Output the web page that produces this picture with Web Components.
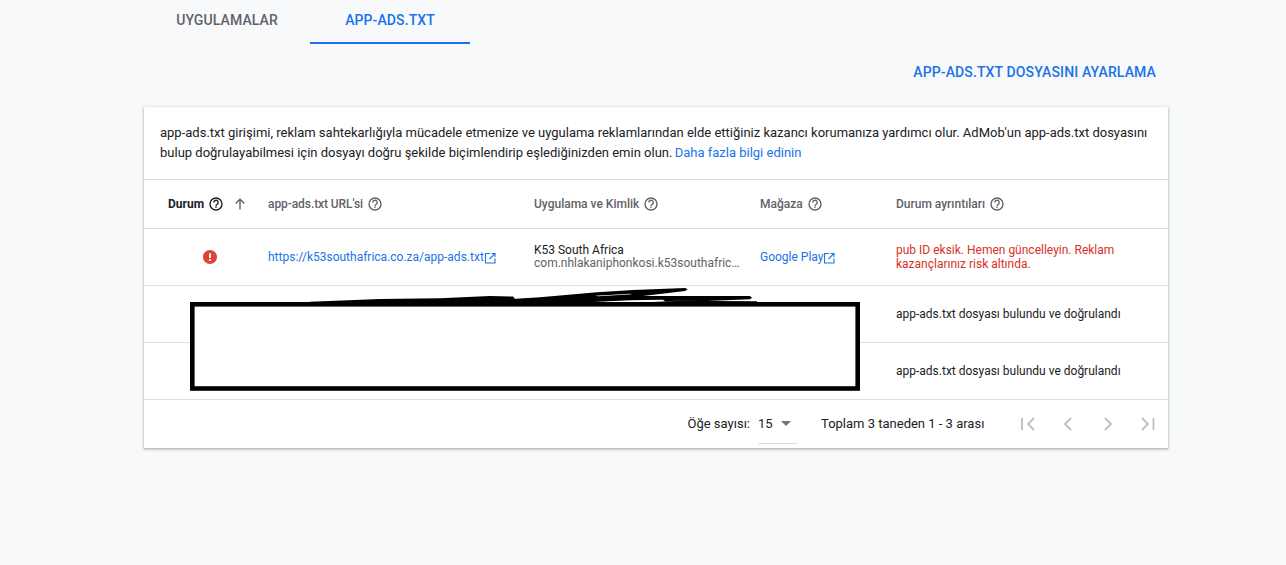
<!DOCTYPE html>
<html lang="tr"><head><meta charset="utf-8">
<style>
html,body{margin:0;padding:0;background:#f8f9fa;height:565px;overflow:hidden;font-family:Roboto,sans-serif;}
body{position:relative}
</style></head><body>
<ads-page>
  <ads-tabs slot="tabs"></ads-tabs>
  <ads-action slot="action">APP-ADS.TXT DOSYASINI AYARLAMA</ads-action>
  <ads-card slot="card">
    <ads-intro></ads-intro>
    <ads-table></ads-table>
    <ads-pager></ads-pager>
  </ads-card>
</ads-page>
<ads-redaction></ads-redaction>
<script>
const HELP='<svg class="help" width="16" height="16" viewBox="0 0 16 16"><circle cx="8" cy="8" r="6" fill="none" stroke="currentColor" stroke-width="1.4"/><path d="M5.8 6.5a2.2 2.2 0 1 1 3.5 1.7c-.8.5-1.3.8-1.3 1.7" fill="none" stroke="currentColor" stroke-width="1.35"/><rect x="7.3" y="10.5" width="1.4" height="1.4" fill="currentColor"/></svg>';
const EXT='<svg class="ext" width="12" height="12" viewBox="0 0 12 12"><path d="M6 1.5H1.5v9.5H11V6.5M7.5 1.5H11V5M10.8 1.7 5.5 7" fill="none" stroke="currentColor" stroke-width="1.1"/></svg>';
function def(name,css,html){
  customElements.define(name,class extends HTMLElement{
    constructor(){super();this.attachShadow({mode:'open'}).innerHTML='<style>'+css+'</style>'+html;}
  });
}
def('ads-page',`:host{display:block}
  .action{display:flex;justify-content:flex-end;padding:0 130px 0 0;height:63px;align-items:flex-start}
  .card{padding:0 118px 0 144px}`,
  `<slot name="tabs"></slot><div class="action"><slot name="action"></slot></div><div class="card"><slot name="card"></slot></div>`);
def('ads-tabs',`:host{display:flex;height:44px;padding-left:144px;font:500 14px/40px Roboto,sans-serif;letter-spacing:.1px}
  a{display:block;text-align:center;box-sizing:border-box;height:44px}
  .a{width:166px;color:#5f6368}
  .b{width:160px;color:#1a73e8;border-bottom:2px solid #1a73e8}`,
  `<a class="a">UYGULAMALAR</a><a class="b">APP-ADS.TXT</a>`);
def('ads-action',`:host{display:block;margin-top:20px;font:500 14px/17px Roboto,sans-serif;color:#1a73e8;letter-spacing:.13px}`,`<slot></slot>`);
def('ads-card',`:host{display:block;background:#fff;box-shadow:0 1px 2px rgba(60,64,67,.3),0 1px 3px 1px rgba(60,64,67,.15);height:341px}`,`<slot></slot>`);
def('ads-intro',`:host{display:block;box-sizing:border-box;height:73px;padding:16px 16px 0;font:13px/20px Roboto,sans-serif;color:#202124;border-bottom:1px solid #dadce0}
  a{color:#1a73e8;margin-left:-1px}`,
  `app-ads.txt girişimi, reklam sahtekarlığıyla mücadele etmenize ve uygulama reklamlarından elde ettiğiniz kazancı korumanıza yardımcı olur. AdMob'un app-ads.txt dosyasını bulup doğrulayabilmesi için dosyayı doğru şekilde biçimlendirip eşlediğinizden emin olun. <a>Daha fazla bilgi edinin</a>`);
def('ads-table',`:host{display:block;font:12px/14px Roboto,sans-serif;color:#202124}
  .row{display:grid;grid-template-columns:124px 266px 226px 136px 1fr;align-items:center;box-sizing:border-box;height:57px;border-bottom:1px solid #e0e0e0}
  .head{height:49px;border-bottom-color:#dadce0;font-weight:500;color:#5f6368}
  .h{display:flex;align-items:center;gap:4px}
  .first{padding-left:24px;color:#202124;font-weight:700}
  .first .help{color:#202124}
  .arrow{margin-left:4px;color:#5f6368}
  .url{letter-spacing:-.08px}
  .st{display:flex;padding-left:59px}
  a{color:#1a73e8;display:flex;align-items:center;gap:0}
  .ext{margin-top:1px}
  .app{padding-bottom:2px}
  .id{color:#5f6368;line-height:13px;white-space:nowrap}
  .red{color:#d93025;padding-right:30px;line-height:14px}`,
  `<div class="row head">
    <div class="h first">Durum ${HELP}<svg class="arrow" width="16" height="16" viewBox="0 0 16 16"><path d="M8 13.5V3.2M3.6 7.6 8 3.2l4.4 4.4" fill="none" stroke="currentColor" stroke-width="1.4"/></svg></div>
    <div class="h"><span class="url">app-ads.txt URL'si</span> ${HELP}</div>
    <div class="h">Uygulama ve Kimlik ${HELP}</div>
    <div class="h">Mağaza ${HELP}</div>
    <div class="h">Durum ayrıntıları ${HELP}</div>
  </div>
  <div class="row">
    <div class="st"><svg width="14" height="14" viewBox="0 0 14 14"><circle cx="7" cy="7" r="7" fill="#db4437"/><rect x="6.1" y="3.2" width="1.8" height="4.8" fill="#fff"/><rect x="6.1" y="9" width="1.8" height="1.8" fill="#fff"/></svg></div>
    <div><a>https://k53southafrica.co.za/app-ads.txt${EXT}</a></div>
    <div class="app"><div>K53 South Africa</div><div class="id">com.nhlakaniphonkosi.k53southafric…</div></div>
    <div><a>Google Play${EXT}</a></div>
    <div class="red">pub ID eksik. Hemen güncelleyin. Reklam kazançlarınız risk altında.</div>
  </div>
  <div class="row"><div></div><div></div><div></div><div></div><div>app-ads.txt dosyası bulundu ve doğrulandı</div></div>
  <div class="row"><div></div><div></div><div></div><div></div><div>app-ads.txt dosyası bulundu ve doğrulandı</div></div>`);
def('ads-pager',`:host{display:flex;align-items:center;height:48px;font:13px/16px Roboto,sans-serif;color:#202124;white-space:nowrap}
  .l{margin-left:543.5px}
  .sel{margin-left:8px;width:39px;height:32px;box-sizing:border-box;border-bottom:1px solid #dadce0;display:flex;align-items:center;gap:8px;margin-top:8px;padding-bottom:8px}
  .tot{margin-left:24px}
  .btns{display:flex;margin-left:auto}
  .btns svg{display:block;width:40px;height:24px;color:#bdbdbd}`,
  `<span class="l">Öğe sayısı:</span>
   <div class="sel"><span>15</span><svg width="10" height="5" viewBox="0 0 10 5"><path d="M0 0h10L5 5z" fill="#757575"/></svg></div>
   <span class="tot">Toplam 3 taneden 1 - 3 arası</span>
   <div class="btns">
   <svg viewBox="0 0 40 24"><path d="M14 6v12M26 6l-6 6 6 6" fill="none" stroke="currentColor" stroke-width="1.8"/></svg>
   <svg viewBox="0 0 40 24"><path d="M23 6l-6 6 6 6" fill="none" stroke="currentColor" stroke-width="1.8"/></svg>
   <svg viewBox="0 0 40 24"><path d="M17 6l6 6-6 6" fill="none" stroke="currentColor" stroke-width="1.8"/></svg>
   <svg viewBox="0 0 40 24"><path d="M14 6l6 6-6 6M25.5 6v12" fill="none" stroke="currentColor" stroke-width="1.8"/></svg>
   </div>`);
def('ads-redaction',`:host{position:absolute;left:0;top:0;width:1286px;height:565px;pointer-events:none}
  svg{display:block}`,
  `<svg width="1286" height="565" viewBox="0 0 1286 565">
   <path d="M310 301.7L380 299L440 298.3L490 296L513 296.6L515 298.7L508 299.3L540 297.3L597 292.3L633 290L685 288L687.7 289.3L685 291L643 296L750 296L752 297.7L750 299.3L707 301L757 301.3L757 304L310 304Z" fill="#000"/>
   <path d="M595 295.7L630 293.8L632 294.2L598 296.3ZM583 302.6L630 300.3L663 299.7L665 301.3L700 300L640 302.6Z" fill="#fff"/>
   <rect x="192.3" y="304.3" width="665.4" height="84.2" fill="#fff" stroke="#000" stroke-width="4.6"/>
   </svg>`);
</script>
</body></html>
